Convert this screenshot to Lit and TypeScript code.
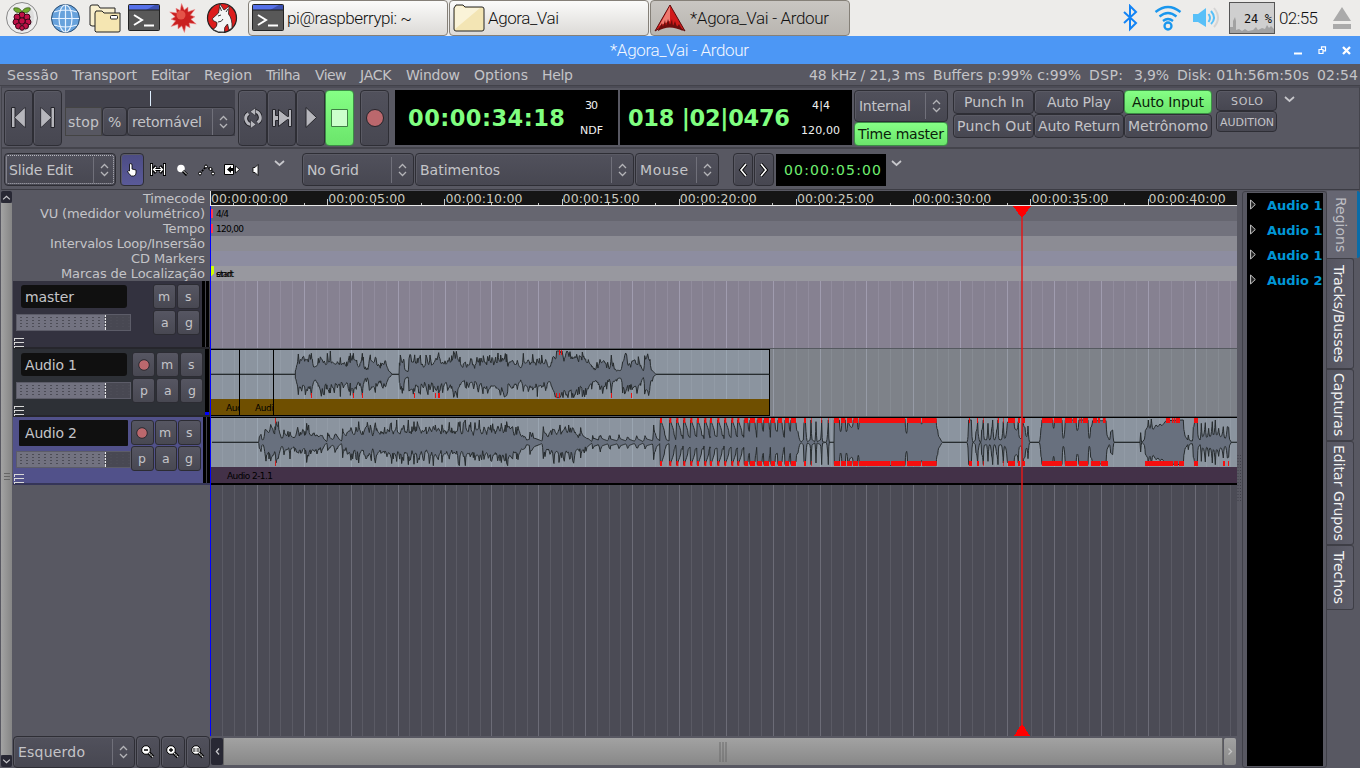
import { LitElement, html, svg, css, nothing } from "lit";
import { customElement, property } from "lit/decorators.js";

/* ---------- text with a known advance width ---------- */
const label = (text: string, w: number, cls = "", h = 18, base = 14) => html`<svg
  class="t ${cls}" width=${w} height=${h}><text x="0" y=${base} textLength=${w}>${text}</text></svg>`;

const textStyles = css`
  .t { display: block; flex: none; overflow: visible; font: 14px "DejaVu Sans", sans-serif; fill: #c4c4c8; white-space: pre; }
  .t.dark { fill: #0a200a; }
  .t.small { font-size: 11px; }
  .t.ruler { font-size: 13px; }
  .t.bar { font: 300 17px Roboto, sans-serif; fill: #111; }
  .t.bar.white { fill: #f4f8ff; }
  .t.digits { font: bold 22.500px "DejaVu Sans", sans-serif; fill: #80ff80; }
  .t.digits-s { font-size: 14px; fill: #70ef70; }
  .t.tiny { font-size: 11px; fill: #f0f0f0; }
  .t.cpu { font: 12px "DejaVu Sans Mono", monospace; fill: #111; }
`;

/* ---------- waveform data: x, y pairs on a 3-per-pixel grid ---------- */
const shift = (d: number, a: number[]) => a.map((v, i) => (i % 2 ? v : v + d));
const saw: number[] = [];
const hits = [62, 90, 111, 132, 153, 173, 195, 212, 234, 255, 276, 294];
hits.forEach((x, i) => {
  const low = i < 2 ? 303 : 296 - (i % 3) * 3;
  saw.push(x - 3, low, x - 1, 240, x + 3, 248, x + 8, 262, x + 11, 272, x + 14, 288, x + 17, low - 4);
});
const blocks = [[313, 324], [330, 345], [352, 366], [372, 387], [393, 405], [414, 426], [435, 447], [453, 468]];
blocks.forEach(([a, b], i) => saw.push(a - 2, 292 - (i % 2) * 18, a, 240, b, 248, b + 3, 272));

const wave1 = [
  ...shift(0, [630, 103]),
  ...shift(840, [46, 103, 46, 90, 50, 75, 55, 42, 58, 62, 65, 58, 68, 66, 76, 60, 82, 58, 90, 60, 94, 40, 97, 60, 103, 82, 110, 78, 115, 70,
    121, 50, 127, 62, 133, 60, 139, 75, 142, 55, 148, 65, 151, 48, 154, 65, 160, 62, 168, 72, 172, 60, 178, 70, 181, 55, 184, 72, 190, 66,
    200, 78, 205, 60, 208, 50, 211, 70, 211, 40, 217, 62, 220, 40, 223, 60, 230, 62, 236, 80, 240, 70, 247, 40, 250, 66, 256, 88, 262, 90,
    268, 52, 272, 62, 280, 62, 288, 68, 295, 75, 302, 80, 306, 62, 312, 70, 317, 60, 322, 80, 330, 95, 336, 103, 357, 103, 358, 80, 361, 60,
    368, 65, 372, 75, 378, 92, 384, 95, 387, 55, 392, 60, 400, 62, 404, 46, 407, 66, 412, 70, 416, 50, 421, 46, 424, 70, 432, 80, 438, 60,
    441, 52, 446, 66, 450, 60, 455, 70, 460, 68, 468, 50, 474, 62, 476, 38, 480, 55, 485, 72, 490, 62, 495, 76, 500, 70, 503, 55, 508, 68,
    515, 62, 521, 34, 526, 48, 532, 50, 540, 66, 550, 82, 560, 76, 566, 68, 575, 72, 585, 78, 592, 65, 600, 72, 610, 62, 620, 66, 630, 60,
    638, 70, 648, 66, 655, 52, 662, 60, 670, 52, 680, 58, 684, 72, 690, 65, 700, 60, 706, 75, 712, 60, 722, 82, 730, 55, 736, 70, 745, 55,
    750, 68, 758, 58, 768, 68, 772, 55, 778, 70, 785, 60, 792, 72, 797, 50, 800, 66, 808, 82, 815, 60, 820, 50, 828, 55, 830, 33, 840, 33,
    846, 45, 852, 55, 858, 40, 864, 52, 870, 50, 878, 50, 885, 45, 890, 58, 898, 62, 904, 66, 907, 36, 911, 50, 918, 60, 925, 60, 935, 75,
    945, 85, 955, 75, 960, 58, 965, 65, 972, 62, 980, 75, 988, 85, 994, 45, 1000, 80, 1010, 90, 1020, 92, 1028, 65, 1034, 48, 1040, 60,
    1045, 70, 1052, 75, 1056, 55, 1065, 62, 1075, 65, 1082, 72, 1090, 90, 1094, 62, 1100, 55, 1110, 60, 1114, 85, 1120, 95, 1128, 103]),
  2308, 103,
];

const wave2 = [
  636, 307, 775, 307, 778, 290, 783, 280, 788, 300, 795, 270, 800, 268, 807, 275, 812, 250, 818, 265, 825, 275, 828, 245, 835, 260,
  840, 275, 846, 295, 852, 270, 858, 285, 866, 285, 870, 275, 876, 290, 884, 290, 890, 275, 898, 280,
  ...shift(840, [62, 278, 75, 285, 80, 265, 86, 270, 92, 285, 102, 278, 108, 285, 118, 285, 128, 288, 135, 300, 140, 305, 143, 275,
    147, 285, 152, 295, 158, 298, 165, 278, 172, 285, 178, 298, 184, 303, 188, 265, 192, 280, 198, 285, 202, 270, 208, 275, 213, 255,
    218, 275, 224, 278, 228, 262, 232, 275, 236, 245, 240, 270, 248, 285, 252, 270, 258, 255, 262, 262, 268, 270, 275, 270, 278, 285,
    283, 262, 290, 265, 300, 280, 308, 270, 315, 278, 322, 265, 328, 272, 335, 262, 340, 275, 350, 255, 353, 272, 360, 275, 365, 262,
    372, 272, 380, 275, 385, 240, 388, 270, 396, 275, 402, 260, 408, 275, 412, 245, 418, 260, 424, 275, 432, 270, 440, 278, 448, 262,
    455, 270, 460, 255, 466, 270, 475, 260, 483, 275, 486, 250, 490, 268, 500, 275, 508, 262, 515, 278, 522, 272, 530, 275, 535, 248,
    540, 260, 545, 278, 550, 265, 556, 255, 565, 275, 572, 262, 580, 278, 585, 250, 590, 270, 598, 255, 602, 270, 608, 275, 612, 255,
    620, 275, 625, 255, 632, 270, 640, 265, 648, 275, 653, 250, 660, 270, 664, 250, 670, 270, 678, 270, 680, 245, 684, 255, 690, 265,
    698, 260, 702, 280, 710, 275, 714, 258, 720, 275, 725, 285, 735, 290, 740, 300, 748, 298, 750, 270, 755, 285, 765, 295, 778, 300,
    785, 303, 790, 262, 795, 280, 805, 285, 810, 268, 815, 275, 822, 262, 830, 280, 837, 265, 845, 278, 850, 262, 856, 275, 866, 270,
    872, 278, 878, 256, 884, 270, 892, 285, 898, 290, 902, 265, 910, 285, 918, 290, 926, 297, 935, 304, 938, 285, 942, 295, 955, 300,
    962, 287, 968, 297, 982, 302, 988, 285, 992, 297, 1010, 302, 1017, 285, 1022, 297, 1036, 302, 1043, 286, 1048, 298, 1062, 303,
    1070, 286, 1076, 298, 1088, 304, 1095, 287, 1100, 297, 1117, 302, 1121, 255, 1126, 280, 1135, 298]),
  ...shift(1920, saw),
  ...shift(1920, [474, 275, 484, 305, 490, 300, 492, 250, 496, 240, 498, 275, 503, 305, 510, 300, 513, 240, 517, 300, 524, 305,
    528, 245, 532, 305, 541, 300, 545, 240, 548, 305, 558, 307, 565, 240, 568, 307, 582, 307, 583, 240, 598, 240, 602, 275, 606, 240,
    616, 240, 619, 275, 624, 240, 636, 262, 640, 240, 652, 240, 655, 268, 658, 237, 795, 237, 800, 280, 803, 237, 840, 237, 845, 252,
    848, 237, 888, 237, 893, 270, 898, 292, 905, 304]),
  ...shift(2820, [8, 307, 80, 307, 84, 290, 86, 240, 94, 240, 96, 290, 100, 307, 106, 300, 108, 275, 113, 245, 116, 290, 122, 307,
    125, 270, 130, 240, 133, 298, 139, 300, 144, 250, 149, 300, 155, 265, 158, 240, 163, 300, 170, 270, 174, 240, 177, 298, 183, 300,
    190, 245, 194, 295, 202, 250, 204, 245, 222, 245, 226, 268, 230, 270, 235, 245, 238, 292, 243, 297, 248, 240, 255, 262, 260, 290,
    264, 258, 270, 307, 297, 307, 303, 265, 306, 240, 338, 240, 341, 265, 344, 240, 366, 240, 370, 295, 376, 240, 408, 240, 412, 272,
    417, 240, 444, 240, 448, 295, 452, 262, 458, 242, 498, 242, 503, 290, 508, 300, 512, 275, 518, 270, 523, 307, 600, 307, 602, 278,
    606, 307, 612, 300, 616, 272, 622, 262, 625, 240, 630, 265, 634, 235, 640, 268, 648, 255, 654, 260, 660, 252, 666, 257, 672, 250,
    678, 242, 730, 240, 733, 275, 738, 292, 743, 300, 745, 285, 750, 302, 757, 303, 760, 262, 764, 242, 772, 242, 775, 292, 780, 300,
    784, 250, 788, 290, 796, 248, 800, 292, 806, 265, 810, 290, 817, 245, 820, 285, 826, 240, 830, 285, 836, 265, 842, 290, 850, 260,
    855, 295, 862, 260, 866, 262, 870, 300, 874, 307, 891, 307]),
];

/* Per-pixel peaks: each half varies on its own, and steep flanks stay close to their quieter side. */
function wavePath(a: number[], mid: number, roughEnd: number): string {
  const hash = (n: number) => { const s = Math.sin(n * 12.9898) * 43758.5453; return s - Math.floor(s); };
  const top: string[] = [];
  const bottom: string[] = [];
  const put = (x: number, amp: number) => {
    const rough = amp > 12 && amp < 60 && x < roughEnd;
    const vary = (seed: number) => {
      if (!rough) return amp;
      const r = hash(x + seed);
      return amp + (r > 0.8 ? 15 : (r - 0.62) * 15) * Math.min(1, amp / 30);
    };
    top.push(`${x},${mid - Math.min(70, vary(1))}`);
    bottom.unshift(`${x},${mid + Math.min(70, vary(500) * (rough ? 1.06 : 1))}`);
  };
  for (let i = 0; i < a.length; i += 2) {
    put(a[i], mid - a[i + 1]);
    if (i + 2 >= a.length) break;
    const dx = a[i + 2] - a[i];
    if (dx > 40) continue;
    const from = mid - a[i + 1];
    const to = mid - a[i + 3];
    for (let x = 1.5; x < dx - 0.5; x += 1.5) {
      if (Math.abs(to - from) > 14) {
        const u = to > from ? x / dx : 1 - x / dx;
        const amp = Math.min(from, to) + Math.abs(to - from) * u ** 2.4;
        top.push(`${a[i] + x},${mid - amp}`);
        bottom.unshift(`${a[i] + x},${mid + amp}`);
      } else if (x % 3 === 0) put(a[i] + x, from + ((to - from) * x) / dx);
    }
  }
  return `M${top.join("L")}L${bottom.join("L")}Z`;
}

const clipTop = [
  ...hits.map((x) => [x + 1918, x + 1924]),
  ...[...blocks, [492, 498], [513, 515], [544, 546], [564, 566], [582, 597], [603, 616], [621, 636], [640, 654], [657, 795], [801, 843], [846, 890]].map(([a, b]) => [a + 1920, b + 1920]),
  ...[[87, 90], [111, 114], [129, 131], [173, 177], [190, 192], [204, 225], [234, 240], [246, 255], [306, 338], [342, 366], [375, 396],
    [399, 411], [417, 419], [422, 426], [429, 444], [459, 471], [474, 480], [489, 497], [678, 690], [696, 700], [702, 706], [708, 720], [762, 774]].map(([a, b]) => [a + 2820, b + 2820]),
];
const clipBottom = [
  ...hits.map((x) => [x + 1918, x + 1924]),
  ...[...blocks, [492, 498], [513, 515], [582, 600], [603, 618], [621, 636], [639, 654], [657, 750], [753, 795], [801, 843], [846, 890]].map(([a, b]) => [a + 1920, b + 1920]),
  ...[[87, 96], [111, 117], [129, 131], [189, 191], [204, 225], [234, 240], [246, 255], [306, 366], [375, 411], [417, 444], [453, 480],
    [483, 504], [615, 699], [702, 714], [717, 732], [762, 774], [849, 855], [864, 867]].map(([a, b]) => [a + 2820, b + 2820]),
];
const peaks1Bottom = [[933, 936], [1059, 1062], [1086, 1089], [1242, 1245], [1305, 1308], [1314, 1320], [1668, 1671], [1677, 1680], [1833, 1836], [1893, 1896]];
const peaks1Top = [[1677, 1680], [1683, 1686]];

/* ---------- arranger canvas ---------- */
@customElement("arrange-canvas")
export class ArrangeCanvas extends LitElement {
  static styles = css`
    :host { display: block; width: 1027px; height: 545px; overflow: hidden; }
    svg { display: block; }
    .tc { font: 12.5px "DejaVu Sans", sans-serif; fill: #c8c8be; }
    .mk { font: 9px "DejaVu Sans", sans-serif; fill: #000; }
  `;
  render() {
    const second = 23.44;
    const beats = Array.from({ length: 88 }, (_, i) => i + 1);
    const secs = Array.from({ length: 44 }, (_, i) => i);
    const lines = (y: number, h: number, weak: string, strong: string) =>
      beats.map((i) => {
        const x = Math.floor(0.6 + (i * second) / 2);
        return svg`<rect x=${x} y=${y} width="1" height=${h} fill=${i % 4 ? weak : strong}/>`;
      });
    return html`<svg width="1027" height="545" viewBox="0 0 1027 545" shape-rendering="crispEdges">
      <rect width="1027" height="545" fill="#4b4b55"/>
      <rect width="1027" height="15" fill="#151515"/>
      ${secs.map((i) => svg`<rect x=${Math.floor(i * second + 0.4)} y=${i % 5 ? 12 : 8} width="1" height=${i % 5 ? 2 : 6} fill="#c8c8c8"/>`)}
      <rect y="14" width="1027" height="1" fill="#e8e8e8"/>
      <rect width="1" height="15" fill="#e8e8e8"/>
      ${[0, 5, 10, 15, 20, 25, 30, 35, 40].map((s) => svg`<text class="tc" x=${s * second + 1} y="12" textLength="77">00:00:${String(s).padStart(2, "0")}:00</text>`)}
      <rect y="15" width="1027" height="15" fill="#666670"/>
      <rect y="30" width="1027" height="15" fill="#72727d"/>
      <rect y="45" width="1027" height="15" fill="#8c8c94"/>
      <rect y="60" width="1027" height="15" fill="#8d8da0"/>
      <rect y="75" width="1027" height="15" fill="#98989f"/>
      <rect y="90" width="1027" height="67" fill="#868191"/>
      ${lines(90, 67, "#918c9d", "#a09caf")}
      <rect y="158" width="1027" height="67" fill="#7e8289"/>
      ${lines(158, 67, "#868b92", "#969ba6")}
      <rect y="157" width="1027" height="1" fill="#565a60"/>
      <rect y="225" width="1027" height="1" fill="#565a60"/>
      ${lines(294, 251, "#5a5a64", "#6c6c77")}

      <rect y="158" width="560" height="67" fill="#000"/>
      <rect y="159" width="559" height="49" fill="#8b949f"/>
      ${lines(159, 49, "#929ba6", "#9aa5b1").slice(0, 47)}
      <rect y="208" width="559" height="16" fill="#6f4f00"/>
      <rect y="226" width="1027" height="68" fill="#000"/>
      <rect y="227" width="1027" height="49" fill="#8b949f"/>
      ${lines(227, 49, "#929ba6", "#9aa5b1")}
      <rect y="276" width="1027" height="16" fill="#433148"/>

      <g transform="translate(-210 149) scale(.33333)" shape-rendering="auto" stroke-linejoin="bevel">
        <path d=${wavePath(wave1, 103, 9999)} fill="#68707e" stroke="#262b2d" stroke-width="3"/>
        <path d=${wavePath(wave2, 307, 1920)} fill="#68707e" stroke="#262b2d" stroke-width="3"/>
        ${peaks1Top.map(([a, b]) => svg`<rect x=${a} y="30" width=${b - a} height="15" fill="#e11"/>`)}
        ${peaks1Bottom.map(([a, b]) => svg`<rect x=${a} y="159" width=${b - a} height="15" fill="#e11"/>`)}
        <rect x="825" y="234" width="3" height="16" fill="#c22"/><rect x="825" y="362" width="3" height="16" fill="#c22"/>
        ${clipTop.map(([a, b]) => svg`<rect x=${a} y="234" width=${b - a} height="15" fill="#f50f0f"/>`)}
        ${clipBottom.map(([a, b]) => svg`<rect x=${a} y="363" width=${b - a} height="15" fill="#f50f0f"/>`)}
      </g>

      <rect x="29" y="158" width="1" height="67"/><rect x="63" y="158" width="1" height="67"/>
      <svg x="0" y="208" width="29" height="16"><text class="mk" x="16" y="12" textLength="24">Audio</text></svg>
      <svg x="30" y="208" width="33" height="16"><text class="mk" x="15" y="12" textLength="24">Audio</text></svg>
      <text class="mk" x="17" y="288" textLength="46">Audio 2-1.1</text>

      <rect y="18" x="0" width="3" height="9" fill="#ff3850"/><rect y="33" x="0" width="3" height="9" fill="#ff3850"/>
      <path d="M1 75h3v7l-3 4z" fill="#d0ff00"/>
      <text class="mk" x="6" y="26" textLength="13">4/4</text>
      <text class="mk" x="6" y="41" textLength="28">120,00</text>
      <text class="mk" x="6" y="86" textLength="18">start</text>
      <text class="mk" x="6" y="86" textLength="16">end</text>
      <rect x="0" y="15" width="1" height="530" fill="#00f"/>
      <rect x="811" y="20" width="2" height="525" fill="#e01a1a" opacity=".75"/>
      <path d="M803 15h18l-8 11h-2z" fill="#f00"/>
      <path d="M804 545l7-11h2l7 11z" fill="#f00"/>
    </svg>`;
  }
}

/* ---------- track header strip ---------- */
@customElement("track-strip")
export class TrackStrip extends LitElement {
  @property() name = "";
  @property() kind = "";
  static styles = [textStyles, css`
    :host { display: block; width: 197px; height: 68px; }
    .strip { display: flex; height: 68px; box-sizing: border-box; border-bottom: 2px solid #26262c; background: #33323f; }
    .strip.audio1 { background: #2d3036; }
    .strip.audio2 { background: #51518a; border-bottom-color: #353558; }
    .left { width: 118px; flex: none; }
    .name { margin: 4px 0 0 8px; width: 102px; height: 23px; padding-left: 4px; background: #101010; border-radius: 3px; display: flex; align-items: center; }
    .audio2 .name { margin: 3px 0 0 6px; width: 103px; height: 26px; padding-left: 6px; border-radius: 1px; }
    .fader { margin: 6px 0 0 3px; width: 113px; height: 15px; border: 1px solid #5c5c68; background: linear-gradient(90deg, #727280 88px, #e6e6e6 88px 89px, #484852 89px); }
    .audio2 .fader { margin-top: 5px; }
    .fader svg, .more { display: block; }
    .more { margin: 7px 0 0 1px; }
    .audio2 .more { margin-top: 6px; }
    .keys { display: grid; grid-template-columns: repeat(2, 23px); grid-template-rows: 25px 25px; gap: 1px; margin: 3px 0 0 auto; align-content: start; }
    .audio1 .keys { grid-template-columns: repeat(3, 23px); }
    .audio2 .keys { grid-template-columns: repeat(3, 22.5px); }
    .key { display: flex; align-items: center; justify-content: center; border: 1px solid #2c2c33; border-radius: 3px; box-sizing: border-box; background: linear-gradient(#565662, #484852); }
    .key .t { font-size: 12.5px; }
    .meter { width: 8px; margin-left: 2px; background: linear-gradient(90deg, #000 3px, #44444c 3px 4px, #000 4px 7px, #44444c 7px); }
    .audio1 .meter { width: 5px; margin-left: 2px; background: linear-gradient(90deg, #000 4px, #333 4px); display: flex; align-items: end; }
    .rms { width: 4px; height: 3px; background: #00f; }
  `];
  render() {
    const rec = html`<div class="key"><svg width="14" height="14"><circle cx="7" cy="7" r="5.3" fill="#bb686d" stroke="#2a2a30"/></svg></div>`;
    const key = (s: string, w: number) => html`<div class="key">${label(s, w, "", 16, 12)}</div>`;
    const audio = this.kind !== "master";
    return html`<div class="strip ${this.kind}">
      <div class="left">
        <div class="name">${label(this.name, audio ? 52 : 49)}</div>
        <div class="fader"><svg width="113" height="15">
          ${Array.from({ length: 19 }, (_, i) => [3, 6, 9, 12].map((y) => svg`<path d="M${3 + i * 6} ${y - .5}h2" stroke="#4c4c56"/>`))}
        </svg></div>
        <svg class="more" width="10" height="11"><path d="M0 .5h10M.5 0v3M0 4.500h10M.5 4v3M0 8.500h10M.5 8v2" stroke="#d8d8d8"/></svg>
      </div>
      <div class="keys">
        ${audio ? rec : nothing}${key("m", 13)}${key("s", 7)}${audio ? key("p", 8) : nothing}${key("a", 8)}${key("g", 8)}
      </div>
      <div class="meter">${this.kind === "audio1" ? html`<div class="rms"></div>` : nothing}</div>
    </div>`;
  }
}

/* ---------- glyphs ---------- */
const updown = html`<svg class="ud" width="9" height="14"><path d="M1 5l3.500-3.500L8 5M1 9l3.500 3.500L8 9" fill="none" stroke="#b4b4b8" stroke-width="1.3"/></svg>`;
const chevron = html`<svg width="11" height="7"><path d="M1 1l4.500 4L10 1" fill="none" stroke="#c8c8cc" stroke-width="1.700"/></svg>`;
const terminal = html`<svg width="32" height="28"><rect x=".5" y=".5" width="31" height="26" rx="1" fill="#585858" stroke="#222"/><path d="M1 1h30v5H1z" fill="#5570e8"/><path d="M18 6l9-5h4v5z" fill="#3c50b0"/><path d="M1 6h30" stroke="#222"/><path d="M6 11l8 5-8 5" fill="none" stroke="#fff" stroke-width="2"/><path d="M16 21.500h10" stroke="#fff" stroke-width="2"/></svg>`;
const burst = Array.from({ length: 24 }, (_, i) => {
  const r = i % 2 ? 8 : i % 4 ? 12 : 14.5;
  const a = (i * Math.PI) / 12 - 0.1;
  return `${15 + r * Math.sin(a)},${15 - r * Math.cos(a)}`;
}).join(" ");
const magnifier = (inner: unknown) => html`<svg width="14" height="14"><path d="M7.500 7.500L12 12" stroke="#000" stroke-width="3.600"/><circle cx="5" cy="5" r="4.300" fill="#fff" stroke="#000"/><path d="M8 8l4 4" stroke="#ddd" stroke-width="1.300" stroke-dasharray="1.500 .6"/>${inner}</svg>`;
const loopArcs = "M8.500 17.500A6 6 0 0 1 4.500 6.500M9.500 4.500A6 6 0 0 1 13.500 15.500";

@customElement("app-root")
export class AppRoot extends LitElement {
  static styles = [textStyles, css`
    :host { display: block; width: 1360px; height: 768px; overflow: hidden; background: #585862; font-family: "DejaVu Sans", sans-serif; }
    svg { display: block; flex: none; }
    .panel { display: flex; box-sizing: border-box; height: 36px; background: #edecea; padding-left: 5px; }
    .launch { display: flex; width: 243px; align-items: center; }
    .launch svg:nth-child(2) { margin-left: 11px; } .launch svg:nth-child(3) { margin-left: 8px; }
    .launch svg:nth-child(4) { margin-left: 6px; } .launch svg:nth-child(5) { margin-left: 8px; } .launch svg:nth-child(6) { margin-left: 8px; }
    .task { display: flex; align-items: center; gap: 3px; width: 200px; height: 36px; box-sizing: border-box; border: 1px solid #858078; border-radius: 4px; background: linear-gradient(#fbfbfa, #dcdad7); margin-right: 1px; padding-left: 3px; }
    .task.on { background: linear-gradient(#c9c6c2, #b9b5b0); padding-left: 3px; }
    .tray { display: flex; align-items: center; margin-left: auto; padding-right: 8px; }
    .tray svg:nth-child(2) { margin-left: 14px; } .tray svg:nth-child(3) { margin-left: 10px; }
    .tray .eject { margin-left: 14px; }
    .cpu-box { width: 46px; height: 32px; margin: 0 4px 0 9px; border: 1px solid #555; background: #cfcfcf; box-sizing: border-box; display: grid; }
    .cpu-box > * { grid-area: 1 / 1; } .cpu-box .t { margin: 8px 0 0 -3px; }
    .title { display: flex; height: 28px; background: #4c97f5; align-items: center; padding: 0 9px 0 610px; justify-content: space-between; }
    .wm { display: flex; gap: 15px; margin-top: 1px; }
    .menu { height: 22px; padding: 2px 2px 0 7px; border-bottom: 1px solid #42424a; display: flex; gap: 14px; box-sizing: border-box; }
    .status { display: flex; margin-left: auto; }
    .status .t { margin-left: 8px; } .status .t.pct { margin-left: 11px; }
    .bar1 { height: 63px; border: 1px solid #44444c; border-top: 2px solid #4c4c56; border-bottom-width: 2px; display: flex; padding: 2px 0 0 2px; box-sizing: border-box; margin: 0 0 0 1px; align-items: flex-start; }
    .bar2 { height: 41px; display: flex; padding: 4px 0 0 2px; box-sizing: border-box; align-items: flex-start; margin-left: 1px; border-bottom: 1px solid #3c3c44; border-left: 1px solid #44444c; border-right: 1px solid #44444c; }
    .b { display: flex; align-items: center; justify-content: center; box-sizing: border-box; border: 1px solid #2e2e35; border-radius: 4px; background: linear-gradient(#51515c, #474751); box-shadow: inset 1px 1px 0 #5a5a64; overflow: hidden; }
    .b.tr { width: 29px; height: 56px; }
    .b.green { background: linear-gradient(#85ff85, #6be56b); border-color: #3c8f46; box-shadow: none; }
    .b.combo { justify-content: flex-start; padding-left: 4px; }
    .b.combo .ud { margin-right: 6px; }
    .sep { width: 1px; height: 26px; background: #70707a; margin-left: auto; margin-right: 6px; flex: none; }
    .vari { width: 170px; height: 46px; margin: 0 3px; display: grid; grid-template-rows: 17px 29px; background: #42424c; }
    .shuttle { display: flex; padding-left: 85px; } .shuttle i { width: 1px; background: #dfefff; margin: 1px 0; }
    .vrow { display: flex; } .stop { width: 37px; box-sizing: border-box; border: 1px solid #444; background: #575761; display: flex; align-items: center; justify-content: center; }
    .pct-b { width: 25px; } .ret { width: 108px; }
    .rec { margin: 0 6px; }
    .clock { background: #000; height: 55px; display: flex; align-items: center; box-sizing: border-box; }
    .c1 { width: 223px; padding-left: 13px; margin-right: 2px; } .c2 { width: 232px; padding-left: 8px; margin-right: 2px; }
    .side { display: grid; gap: 7px; justify-items: center; margin-left: 15px; } .c2 .side { margin-left: 11px; }
    .sync { display: grid; gap: 0; width: 94px; grid-template-rows: 32px 24px; margin-right: 5px; }
    .opts { display: grid; grid-template-columns: 81px 90px 88px; grid-template-rows: 24px 24px; margin-right: 4px; }
    .solo { display: grid; width: 61px; grid-template-rows: 21px 21px; margin-right: 7px; }
    .chev { margin-top: 6px; }
    .b.h { height: 33px; }
    .slide { width: 112px; outline: 1px dotted #b8b8c0; outline-offset: -3px; margin-right: 4px; }
    .hand { width: 24px; margin-right: 6px; background: linear-gradient(#4c4c84, #5a5a98); }
    .tools { display: flex; align-items: center; height: 33px; gap: 9px; width: 124px; }
    .bar2 .chev { margin-top: 7px; }
    .grid { width: 112px; margin: 0 1px 0 17px; } .beat { width: 219px; margin-right: 1px; } .mouse { width: 84px; margin-right: 14px; }
    .nudge { width: 20px; margin-right: 1px; }
    .nclock { width: 110px; height: 32px; margin: 1px 5px 0 1px; background: #000; display: flex; align-items: center; padding-left: 8px; box-sizing: border-box; }
    .work { display: grid; grid-template-columns: 13px 197px 1027px 5px 118px; height: 578px; }
    .vs { margin: 1px 0 0 1px; width: 11px; display: grid; grid-template-rows: 12px 1fr 12px; height: 576px; }
    .sb { background: #282834; border-radius: 2px; display: flex; align-items: center; justify-content: center; }
    .sb svg { transform: scale(.75); }
    .thumb { background: linear-gradient(90deg, #a3a3a3, #858585); display: flex; align-items: center; justify-content: center; }
    .thumb svg { margin-top: -4px; }
    .heads { display: grid; grid-template-rows: 91px 68px 68px 68px 251px 32px; }
    .rulers { padding: 1px 5px 0 0; display: grid; grid-template-rows: repeat(6, 15px); justify-items: end; }
    .foot { display: flex; gap: 1px; } .foot .b { height: 32px; } .esq { width: 122px; } .zm { width: 24px; }
    .mid { padding-top: 1px; }
    .hs { display: grid; grid-template-columns: 12px 1fr 13px; height: 27px; margin: 2px 0 0 1px; column-gap: 0; width: 1025px; }
    .hs .thumb { background: linear-gradient(#a2a2a2, #888); border: 1px solid #666; border-width: 0 1px; } .hs .thumb svg { margin-top: 0; }
    .hs .end { background: linear-gradient(#a2a2a2, #888); border-radius: 2px; margin-left: 1px; display: flex; align-items: center; justify-content: center; }
    .grip { padding-top: 265px; }
    .right { display: grid; grid-template-columns: 85px 33px; }
    .frame { border: 1px solid #404048; border-radius: 3px; margin: 1px 0 0; height: 577px; padding: 1px 3px 0 4px; box-sizing: border-box; }
    .list { background: #000; height: 573px; overflow: hidden; }
    .item { display: flex; height: 25px; align-items: center; gap: 11px; padding-left: 3px; box-sizing: border-box; padding-bottom: 1px; }
    .item .t { font: bold 13px "DejaVu Sans", sans-serif; fill: #0096d6; }
    .tabs { padding-top: 1px; }
    .tab { box-sizing: border-box; width: 27px; border: 1px solid #3e3e46; border-left: 0; border-radius: 0 3px 3px 0; writing-mode: vertical-rl; color: #f2f2f2; font-size: 14px; display: flex; align-items: center; justify-content: center; background: linear-gradient(90deg, #555560, #5d5d69); line-height: 22px; padding-right: 2px; }
    .tab.on { width: 33px; border: 0; border-right: 3px solid #0a6ca8; color: #bdbdc2; background: #666672; height: 67px; }
    .t1 { height: 111px; } .t2 { height: 72px; } .t3 { height: 104px; } .t4 { height: 65px; }
  `];

  combo(text: string, w: number, cls: string) {
    return html`<div class="b combo ${cls}">${label(text, w)}<i class="sep"></i>${updown}</div>`;
  }

  render() {
    return html`
    <div class="panel">
      <div class="launch">
        <svg width="34" height="34"><circle cx="17" cy="17" r="15.500" fill="#eee" stroke="#888"/><path d="M23 4a15 15 0 0 1-8 27z" fill="#ccc" opacity=".5"/><path d="M16 12C10 12 8 9 9 7c4-1 7 1 8 4 1-3 4-5 8-4 1 2-1 5-7 5z" fill="#6fa82e" stroke="#33501a" stroke-width=".7"/><g fill="#c01048" stroke="#3a0818"><circle cx="17" cy="14" r="3"/><circle cx="12" cy="16" r="3"/><circle cx="22" cy="16" r="3"/><circle cx="11" cy="21" r="3"/><circle cx="23" cy="21" r="3"/><circle cx="17" cy="20" r="3.200"/><circle cx="13.500" cy="25" r="3"/><circle cx="20.500" cy="25" r="3"/><circle cx="17" cy="27" r="2.300"/></g></svg>
        <svg width="31" height="31"><circle cx="15.500" cy="15.500" r="14" fill="#67a2dc" stroke="#26496e"/><g fill="none" stroke="#e6f2ff" stroke-width="1.200"><ellipse cx="15.500" cy="15.500" rx="6.500" ry="13.500"/><path d="M15.500 2v27M2 15.500h27M4 9q11.500-4 23 0M4 22q11.500 4 23 0"/></g></svg>
        <svg width="33" height="29"><g stroke="#222"><path d="M1 21V3q0-2 2-2h6l2 3h15v18H3z" fill="#f8efce"/><path d="M6 27V9l1-2h6l2 2h16v18q0 1-2 1H7z" fill="#f5e6b2"/><rect x="21.500" y="11.500" width="7" height="3.500" rx="1" fill="#fff"/></g></svg>
        ${terminal}
        <svg width="30" height="30"><polygon points=${burst} fill="#c92020" stroke="#e88" stroke-width=".6"/><circle cx="13" cy="12" r="4.500" fill="#ef6a5a" opacity=".7"/></svg>
        <svg width="32" height="32"><circle cx="16" cy="16" r="14.500" fill="#dc1c1c" stroke="#222" stroke-width="1.200"/><path d="M7 27.500q5-3 4-7l-4-2-.500-2 6-5.500L14 2l4 6q2-1 5-4l-.5 8q4 5 3.500 14l-3 2-1.500-6q-4 3-3 8-6 1-11.500-2.500z" fill="#f4f4f4" stroke="#222" stroke-width=".8"/><path d="M12 14l3-1M14 5l1.500 4M22 7l-2 3M12 20q4 0 5-3" fill="none" stroke="#222" stroke-width=".9"/></svg>
      </div>
      <div class="task">${terminal}${label("pi@raspberrypi: ~", 125, "bar", 20, 16)}</div>
      <div class="task"><svg width="32" height="28"><path d="M1 25V4l2-3h7l2 2h17q2 0 2 2v20q0 2-2 2H3q-2 0-2-2z" fill="#f3e5b4" stroke="#222"/><path d="M2 25V4l2-2h5l2 2h16z" fill="#faf3d8"/></svg>${label("Agora_Vai", 71, "bar", 20, 16)}</div>
      <div class="task on"><svg width="33" height="30"><path d="M16 2L1 28q8-6 15-6t15 6z" fill="#d11a1a" stroke="#5a0c0c"/><path d="M16 3L5 23l11-5z" fill="#ef7a70"/><path d="M4 27l4-7 1 4 2-7 1 6 2-7 2 6 2-6 1 7 2-5 2 6 2-3 4 7q-14-7-25 0z" fill="#6e0d0d"/></svg>${label("*Agora_Vai - Ardour", 139, "bar", 20, 16)}</div>
      <div class="tray">
        <svg width="18" height="28"><path d="M2 8l12 11-6 6V2l6 6L2 19" fill="none" stroke="#1283f5" stroke-width="2"/></svg>
        <svg width="28" height="28"><g fill="none" stroke="#1a97ee" stroke-width="2.300"><path d="M1.500 8q12.500-10 25 0M5.500 12.500q8.500-7 17 0M9 17q5-4 10 0"/><circle cx="14" cy="22" r="3.500"/></g></svg>
        <svg width="28" height="26"><path d="M1 9h5l8-6v19l-8-5H1z" fill="#58c0f8"/><g fill="none" stroke-width="2"><path d="M16.500 9q3 4 0 8M19 6q6 7 0 13" stroke="#58c0f8"/><path d="M22 3q8 10 0 19" stroke="#d5d5d5"/></g></svg>
        <div class="cpu-box"><svg width="44" height="30"><path d="M0 30V24h3V18l2-4 1 4v9l3-1 3 2 3-2 3 2 5-1 3-3 2 3 4-2 3 1 2-4 2 3 2-2 3 3V30z" fill="#a2a2a2"/></svg>${label("24 %", 28, "cpu", 16, 12)}</div>
        ${label("02:55", 39, "bar", 20, 16)}
        <svg class="eject" width="20" height="24"><path d="M10 1l9 14H1zM1 18h18v5H1z" fill="#aaa"/></svg>
      </div>
    </div>
    <div class="title">${label("*Agora_Vai - Ardour", 139, "bar white", 20, 16)}
      <div class="wm"><svg width="9" height="9"><path d="M0 7.500h8" stroke="#fff" stroke-width="2"/></svg>
      <svg width="9" height="9"><path d="M1 3.500h4v4H1zM3.500 3V.8h4v4H5.500" fill="none" stroke="#fff" stroke-width="1.200"/></svg>
      <svg width="9" height="9"><path d="M1 1l7 7M8 1L1 8" stroke="#fff" stroke-width="2.300"/></svg></div>
    </div>
    <div class="menu">
      ${([["Sessão", 51], ["Transport", 65], ["Editar", 39], ["Region", 48], ["Trilha", 34.5], ["View", 31.5], ["JACK", 31.5], ["Window", 54], ["Options", 54], ["Help", 31]] as [string, number][]).map(([s, w]) => label(s, w))}
      <div class="status">
        ${label("48 kHz / 21,3 ms", 116)}${label("Buffers p:99% c:99%", 148)}${label("DSP:", 34)}
        ${label("3,9%", 35, "pct")}${label("Disk: 01h:56m:50s", 132)}${label("02:54", 41)}
      </div>
    </div>
    <div class="bar1">
      <div class="b tr"><svg width="17" height="24"><path d="M1.500 1.500h3.500v20H1.500zM5 11.500l10-10v20z" fill="#b6b6bc" stroke="#25252b"/><path d="M3.200 2.500v18M6 11.500l8-7.500v15z" stroke="#b6b6bc" fill="#b6b6bc" stroke-width="1.500"/></svg></div>
      <div class="b tr"><svg width="17" height="24"><path d="M2 1.500v20l10-10zM12 1.500h3.500v20H12z" fill="#b6b6bc" stroke="#25252b"/><path d="M13.800 2.500v18M3 4v15l8-7.500z" stroke="#b6b6bc" fill="#b6b6bc" stroke-width="1.500"/></svg></div>
      <div class="vari"><div class="shuttle"><i></i></div><div class="vrow">
        <div class="stop">${label("stop", 31)}</div><div class="b pct-b">${label("%", 13)}</div>${this.combo("retornável", 70, "ret")}</div></div>
      <div class="b tr"><svg width="18" height="22"><g fill="none"><path d=${loopArcs} stroke="#25252b" stroke-width="5"/><path d=${loopArcs} stroke="#b6b6bc" stroke-width="2.800"/></g><path d="M11.500 .8v8L6 4.700zM6.500 13v8.500l5.500-4z" fill="#b6b6bc" stroke="#25252b" stroke-width=".6"/></svg></div>
      <div class="b tr"><svg width="22" height="20"><path d="M1.500 1.500h3v6h3v-6l9 7h1v-7h3v17h-3v-7h-1l-9 7v-6h-3v6h-3z" fill="#b6b6bc" stroke="#25252b"/><path d="M7.500 3v14" stroke="#25252b"/></svg></div>
      <div class="b tr"><svg width="14" height="24"><path d="M2 1.500v20l10.500-10z" fill="#b6b6bc" stroke="#25252b"/></svg></div>
      <div class="b tr green"><svg width="17" height="18"><path d="M.5.5h16v17H.5z" fill="#ccffcc" stroke="#3f7f45"/></svg></div>
      <div class="b tr rec"><svg width="20" height="20"><circle cx="10" cy="10" r="8.500" fill="#bb686d" stroke="#25252b"/></svg></div>
      <div class="clock c1">${label("00:00:34:18", 157, "digits", 30, 23)}<div class="side">${label("30", 13, "tiny", 18, 13)}${label("NDF", 23, "tiny", 18, 13)}</div></div>
      <div class="clock c2">${label("018 |02|0476", 162, "digits", 30, 23)}<div class="side">${label("4|4", 18, "tiny", 18, 13)}${label("120,00", 39, "tiny", 18, 13)}</div></div>
      <div class="sync">${this.combo("Internal", 52, "")}<div class="b green">${label("Time master", 86, "dark")}</div></div>
      <div class="opts">
        <div class="b">${label("Punch In", 60)}</div><div class="b">${label("Auto Play", 64)}</div><div class="b green">${label("Auto Input", 72, "dark")}</div>
        <div class="b">${label("Punch Out", 74)}</div><div class="b">${label("Auto Return", 82)}</div><div class="b">${label("Metrônomo", 80)}</div>
      </div>
      <div class="solo"><div class="b">${label("SOLO", 32, "small", 16, 11.5)}</div><div class="b">${label("AUDITION", 54, "small", 16, 11.5)}</div></div>
      <div class="chev">${chevron}</div>
    </div>
    <div class="bar2">
      ${this.combo("Slide Edit", 64, "h slide")}
      <div class="b h hand"><svg width="10" height="14"><path d="M2.500 8V2q0-1.500 1.200-1.500T5 2v4l4 1v3q0 3-2.500 3h-2Q2.500 12 .5 8.500q1-1 2-.5z" fill="#fff" stroke="#000" stroke-width=".8"/></svg></div>
      <div class="tools">
        <svg width="16" height="13"><path d="M1.500 0v13M14.500 0v13M3 6.500h10M6 3L3 6.500 6 10M10 3l3 3.500-3 3.500" fill="none" stroke="#000" stroke-width="3"/><path d="M1.500 1v11M14.500 1v11M3 6.500h10M6 4L3.500 6.500 6 9M10 4l2.500 2.500L10 9" fill="none" stroke="#fff" stroke-width="1.200"/></svg>
        <svg width="14" height="12"><circle cx="6" cy="4.500" r="3.800" fill="#fff"/><path d="M8 7l4 4" stroke="#000" stroke-width="3"/><path d="M8.500 7l3.500 3.500" stroke="#eee"/></svg>
        <svg width="17" height="12"><path d="M2 9.500L8 2.500 13 5l2 4.500" fill="none" stroke="#000" stroke-width="1.700" stroke-dasharray="2 1"/><g fill="#fff" stroke="#000"><circle cx="2" cy="9.500" r="1.500"/><circle cx="8" cy="2.500" r="1.500"/><circle cx="12.500" cy="5" r="1.500"/><circle cx="15" cy="9.500" r="1.500"/></g></svg>
        <svg width="17" height="13"><path d="M.5 1.500h9v10h-9z" fill="#fff" stroke="#000"/><path d="M3 6.500l4-3.500v2h3v3H7v2z" fill="#000"/><path d="M15.500 6.500L11.500 3v7z" fill="#fff" stroke="#000" stroke-width=".8"/></svg>
        <svg width="12" height="12"><path d="M3 3.500h2l3-3v11l-3-3H3z" fill="#fff" stroke="#000" stroke-width=".8"/></svg>
      </div>
      <div class="chev">${chevron}</div>
      ${this.combo("No Grid", 52, "h grid")}${this.combo("Batimentos", 80, "h beat")}${this.combo("Mouse", 48, "h mouse")}
      <div class="b h nudge"><svg width="10" height="16"><path d="M8 2L3 8l5 6" fill="none" stroke="#000" stroke-width="3.500"/><path d="M8 2L3 8l5 6" fill="none" stroke="#fff" stroke-width="1.600"/></svg></div>
      <div class="b h nudge"><svg width="10" height="16"><path d="M2 2l5 6-5 6" fill="none" stroke="#000" stroke-width="3.500"/><path d="M2 2l5 6-5 6" fill="none" stroke="#fff" stroke-width="1.600"/></svg></div>
      <div class="nclock">${label("00:00:05:00", 97, "digits-s")}</div>
      <div class="chev">${chevron}</div>
    </div>
    <div class="work">
      <div class="vs">
        <div class="sb"><svg width="11" height="7"><path d="M1 6l4.500-4L10 6" fill="none" stroke="#c8c8cc" stroke-width="1.700"/></svg></div>
        <div class="thumb"><svg width="6" height="8"><path d="M0 .5h6M0 3.500h6M0 6.500h6" stroke="#666"/></svg></div>
        <div class="sb">${chevron}</div>
      </div>
      <div class="heads">
        <div class="rulers">
          ${([["Timecode", 62], ["VU (medidor volumétrico)", 165], ["Tempo", 42], ["Intervalos Loop/Insersão", 155], ["CD Markers", 74], ["Marcas de Localização", 144]] as [string, number][]).map(([s, w]) => label(s, w, "ruler", 15, 12))}
        </div>
        <track-strip name="master" kind="master"></track-strip>
        <track-strip name="Audio 1" kind="audio1"></track-strip>
        <track-strip name="Audio 2" kind="audio2"></track-strip>
        <div></div>
        <div class="foot">${this.combo("Esquerdo", 67, "esq")}
          <div class="b zm">${magnifier(svg`<path d="M3 5h4" stroke="#000" stroke-width="1.300"/>`)}</div>
          <div class="b zm">${magnifier(svg`<path d="M3 5h4M5 3v4" stroke="#000" stroke-width="1.300"/>`)}</div>
          <div class="b zm">${magnifier(svg`<path d="M3 3v4M7 3v4M5 3.500v1M5 5.500v1" stroke="#000"/>`)}</div>
        </div>
      </div>
      <div class="mid"><arrange-canvas></arrange-canvas>
        <div class="hs"><div class="sb"><svg width="7" height="11"><path d="M5.500 1.500L2 5.500l3.500 4" fill="none" stroke="#c8c8cc" stroke-width="1.700"/></svg></div>
          <div class="thumb"><svg width="9" height="20"><path d="M1 0v20M4 0v20M7 0v20" stroke="#6a6a6a"/></svg></div>
          <div class="end"><svg width="7" height="9"><path d="M1.500 1.500l3 3-3 3" fill="none" stroke="#c4c4c4" stroke-width="1.300"/></svg></div></div>
      </div>
      <div class="grip"><svg width="4" height="48"><path d="M1 0v48M3.500 0v48" stroke="#3f3f48" stroke-dasharray="1 2"/></svg></div>
      <div class="right">
        <div class="frame"><div class="list">
          ${["Audio 1", "Audio 1", "Audio 1", "Audio 2"].map((s) => html`<div class="item"><svg width="6" height="12"><path d="M.6 1v9L5.300 5.500z" fill="#222" stroke="#ccc"/></svg>${label(s, 55.5, "", 18, 13.5)}</div>`)}
        </div></div>
        <div class="tabs"><div class="tab on">Regions</div><div class="tab t1">Tracks/Busses</div><div class="tab t2">Capturas</div><div class="tab t3">Editar Grupos</div><div class="tab t4">Trechos</div></div>
      </div>
    </div>`;
  }
}
